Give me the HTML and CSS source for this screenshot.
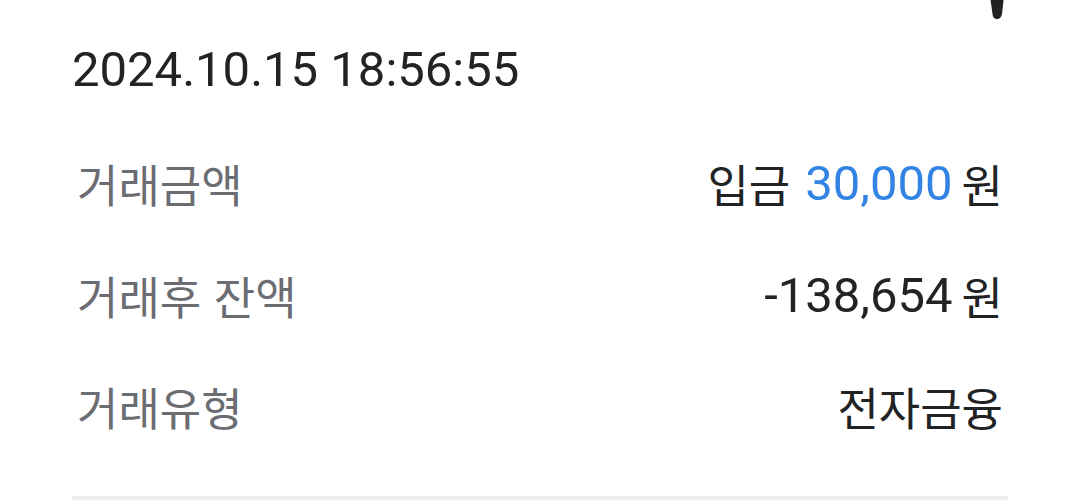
FILE: index.html
```html
<!DOCTYPE html>
<html lang="ko">
<head>
<meta charset="utf-8">
<link rel="stylesheet" href="styles.css">
</head>
<body>
<div class="page">
  <svg class="mark" width="20" height="26" viewBox="0 0 20 26"><path d="M2 0 L16 0 L14 18 Q13 23 9 23 Q5 23 4.5 18 Z" fill="#222"/></svg>
  <div class="date">2024.10.15 18:56:55</div>
  <div class="rows">
    <div class="row"><span class="label">거래금액</span><span class="value"><span class="ko">입금</span><span class="num blue">30,000</span><span class="ko won">원</span></span></div>
    <div class="row"><span class="label">거래후 잔액</span><span class="value"><span class="num">-138,654</span><span class="ko won">원</span></span></div>
    <div class="row"><span class="label">거래유형</span><span class="value"><span class="ko">전자금융</span></span></div>
  </div>
  <div class="divider"></div>
</div>
</body>
</html>
```
FILE: styles.css
```css
html, body { margin: 0; padding: 0; background: #fff; }
body { font-family: Roboto, "Noto Sans CJK KR", sans-serif; color: #222325; }
.page { position: relative; width: 1080px; height: 504px; overflow: hidden; padding: 0 72px; box-sizing: border-box; }
.mark { position: absolute; left: 988px; top: -4px; }
.date { font-size: 49px; line-height: 56px; padding-top: 42px; }
.rows { display: flex; flex-direction: column; padding-top: 30px; }
.row { display: flex; justify-content: space-between; align-items: center; height: 111.5px; }
.label { font-family: "Noto Sans CJK KR", sans-serif; font-size: 45px; color: #6b6d72; padding-left: 5px; }
.value { display: flex; align-items: center; padding-right: 5px; }
.ko { font-family: "Noto Sans CJK KR", sans-serif; font-size: 45px; }
.num { font-family: Roboto, sans-serif; font-size: 49px; }
.blue { color: #3184e4; margin-left: 15px; }
.won { margin-left: 9px; }
.divider { height: 4px; background: #eceef0; margin-top: 33px; }
```
